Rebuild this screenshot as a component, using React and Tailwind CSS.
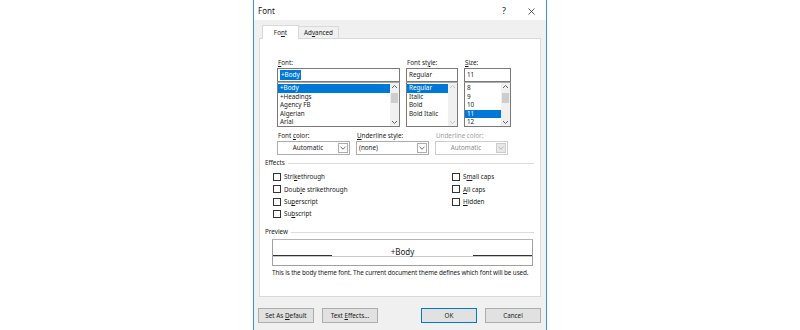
import React from "react";

const U = ({ children }) => <span className="underline underline-offset-1">{children}</span>;

const ScrollBar = ({ thumb, disabled }) => (
  <div className="w-[9px] h-full flex flex-col items-center justify-between bg-[#f0f0f0] py-[1px]">
    <svg width="7" height="5" viewBox="0 0 7 5">
      <path d="M1 4 L3.5 1.5 L6 4" fill="none" stroke={disabled ? "#c4c4c4" : "#606060"} strokeWidth="1" />
    </svg>
    {thumb ? <div className="w-[7px] h-[10px] bg-[#cdcdcd] -mt-[14px]" /> : <div />}
    <svg width="7" height="5" viewBox="0 0 7 5">
      <path d="M1 1 L3.5 3.5 L6 1" fill="none" stroke={disabled ? "#c4c4c4" : "#606060"} strokeWidth="1" />
    </svg>
  </div>
);

const ListCol = ({ label, width, value, items, selected, thumb, disabled }) => (
  <div className="flex flex-col" style={{ width }}>
    <div className="h-[10px] leading-[10px] pl-[1px]">{label}</div>
    <div className="h-[14px] border border-[#7a7a7a] bg-white flex items-center px-[2px]">
      {value === "+Body" ? <span className="bg-[#0078d7] text-white px-[1px] leading-[10px]">{value}</span> : <span>{value}</span>}
    </div>
    <div className="h-[45px] border border-[#7a7a7a] border-t-[#adadad] bg-white flex">
      <div className="flex-1 flex flex-col pt-[1px]">
        {items.map((it) => (
          <div
            key={it}
            className={
              "h-[8.5px] leading-[8.5px] pl-[2px] " + (it === selected ? "bg-[#0078d7] text-white" : "")
            }
          >
            {it}
          </div>
        ))}
      </div>
      <ScrollBar thumb={thumb} disabled={disabled} />
    </div>
  </div>
);

const Combo = ({ label, value, disabled, center }) => (
  <div className="flex flex-col w-[73px]">
    <div className={"h-[10px] leading-[10px] pl-[1px] " + (disabled ? "text-[#a0a0a0]" : "")}>{label}</div>
    <div
      className={
        "h-[14px] border flex items-stretch " +
        (disabled ? "border-[#cccccc] bg-white text-[#8a8a8a]" : "border-[#adadad] bg-white")
      }
    >
      <div className={"flex-1 flex items-center " + (center ? "justify-center" : "pl-[2px]")}>{value}</div>
      <div
        className={
          "w-[10px] my-[1px] mr-[1px] border flex items-center justify-center " +
          (disabled ? "border-[#cccccc] bg-[#e8e8e8]" : "border-[#adadad] bg-white")
        }
      >
        <svg width="6" height="4" viewBox="0 0 6 4">
          <path d="M0.5 0.8 L3 3.2 L5.5 0.8" fill="none" stroke={disabled ? "#b0b0b0" : "#606060"} strokeWidth="0.9" />
        </svg>
      </div>
    </div>
  </div>
);

const Check = ({ children }) => (
  <div className="h-[12.3px] flex items-center gap-[3px]">
    <div className="w-[8px] h-[8px] border border-[#333333] bg-white" />
    <span>{children}</span>
  </div>
);

const Group = ({ title }) => (
  <div className="flex items-center h-[10px] gap-[3px]">
    <span>{title}</span>
    <div className="flex-1 h-px bg-[#dcdcdc]" />
  </div>
);

const Btn = ({ children, primary }) => (
  <div
    className={
      "w-[56px] h-[15px] flex items-center justify-center bg-[#e1e1e1] border " +
      (primary ? "border-[#0078d7] border-[1.5px]" : "border-[#adadad]")
    }
  >
    <span>{children}</span>
  </div>
);

export default function App() {
  return (
    <div className="w-[800px] h-[330px] bg-white flex justify-center font-['Noto_Sans',sans-serif] text-[6.3px] text-[#1a1a1a]">
      <div className="w-[294px] h-[330px] border-x border-[#3c8fdc] bg-[#f0f0f0] flex flex-col">
        <div className="h-[20px] bg-white flex items-center pl-[4px] pr-[11px] pt-[2px] text-[8px]">
          <span className="flex-1">Font</span>
          <span className="text-[9px] mr-[22px]">?</span>
          <svg width="7" height="7" viewBox="0 0 7 7">
            <path d="M0.5 0.5 L6.5 6.5 M6.5 0.5 L0.5 6.5" stroke="#333" strokeWidth="0.8" />
          </svg>
        </div>
        <div className="px-[5px] pt-[4px]">
          <div className="flex items-end pl-[3px] h-[14px]">
            <div className="w-[37px] h-[14px] bg-white border border-b-0 border-[#d9d9d9] flex items-center justify-center -mb-px relative z-10">
              <span>Fo<U>n</U>t</span>
            </div>
            <div className="w-[40px] h-[12px] bg-[#f0f0f0] border border-l-0 border-b-0 border-[#d9d9d9] flex items-center justify-center">
              <span>Ad<U>v</U>anced</span>
            </div>
          </div>
          <div className="h-[259px] bg-white border border-[#d9d9d9] flex flex-col pl-[5px] pr-[6px] pt-[19px]">
            <div className="flex gap-[6px] pl-[12px]">
              <ListCol
                label={<><U>F</U>ont:</>}
                width={123}
                value="+Body"
                items={["+Body", "+Headings", "Agency FB", "Algerian", "Arial"]}
                selected="+Body"
                thumb
              />
              <ListCol
                label={<>Font st<U>y</U>le:</>}
                width={52}
                value="Regular"
                items={["Regular", "Italic", "Bold", "Bold Italic"]}
                selected="Regular"
                disabled
              />
              <ListCol
                label={<><U>S</U>ize:</>}
                width={47}
                value="11"
                items={["8", "9", "10", "11", "12"]}
                selected="11"
                thumb
              />
            </div>
            <div className="flex gap-[6px] pl-[12px] mt-[4px]">
              <Combo label={<>Font <U>c</U>olor:</>} value="Automatic" center />
              <Combo label={<><U>U</U>nderline style:</>} value="(none)" />
              <Combo label="Underline color:" value="Automatic" disabled center />
            </div>
            <div className="mt-[3px]">
              <Group title="Effects" />
            </div>
            <div className="flex pl-[8px] mt-[3px]">
              <div className="flex flex-col w-[179px]">
                <Check>Stri<U>k</U>ethrough</Check>
                <Check>Doub<U>l</U>e strikethrough</Check>
                <Check>Su<U>p</U>erscript</Check>
                <Check>Su<U>b</U>script</Check>
              </div>
              <div className="flex flex-col">
                <Check>S<U>m</U>all caps</Check>
                <Check><U>A</U>ll caps</Check>
                <Check><U>H</U>idden</Check>
              </div>
            </div>
            <div className="mt-[7px]">
              <Group title="Preview" />
            </div>
            <div className="ml-[7px] mr-[1px] mt-[2px] h-[27px] border border-[#a0a0a0] border-t-[#b4b4b4] flex flex-col">
              <div className="h-[17px] flex items-end border-b border-[#c8c8c8]">
                <div className="w-[59px] h-px bg-[#333]" />
                <div className="flex-1 text-center text-[8px] leading-[10px] -mb-[1px]">+Body</div>
                <div className="w-[59px] h-px bg-[#333]" />
              </div>
            </div>
            <div className="ml-[7px] mt-[2px] leading-[9px] whitespace-nowrap tracking-[-0.1px]">
              This is the body theme font. The current document theme defines which font will be used.
            </div>
          </div>
        </div>
        <div className="flex px-[4px] mt-[11px]">
          <Btn>Set As <U>D</U>efault</Btn>
          <div className="ml-[8px]"><Btn>Text <U>E</U>ffects...</Btn></div>
          <div className="flex-1" />
          <Btn primary>OK</Btn>
          <div className="ml-[8px] mr-[1px]"><Btn>Cancel</Btn></div>
        </div>
      </div>
    </div>
  );
}
